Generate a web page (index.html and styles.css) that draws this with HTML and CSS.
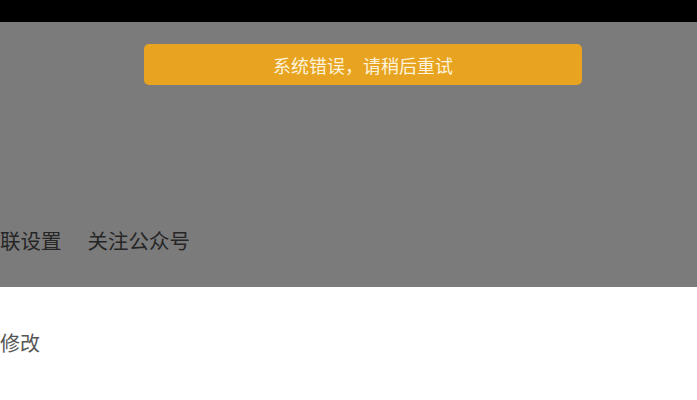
FILE: index.html
```html
<!DOCTYPE html>
<html lang="zh">
<head>
<meta charset="utf-8">
<title>设置</title>
<link rel="stylesheet" href="styles.css">
</head>
<body>
<div class="statusbar"></div>
<div class="masked">
  <div class="header-line"></div>
  <div class="nav">
    <span class="nav-item">联设置</span>
    <span class="nav-item">关注公众号</span>
  </div>
  <div class="toast">系统错误，请稍后重试</div>
</div>
<div class="content">
  <div class="row">修改</div>
</div>
</body>
</html>
```
FILE: styles.css
```css
html, body {
  margin: 0;
  padding: 0;
  width: 697px;
  height: 400px;
  overflow: hidden;
  background: #ffffff;
  font-family: "Noto Sans CJK SC", "Noto Sans", sans-serif;
}
.statusbar {
  height: 22px;
  background: #000000;
}
.masked {
  position: relative;
  height: 265px;
  background: #7b7b7b;
  display: flex;
  flex-direction: column;
  justify-content: flex-end;
}
.header-line {
  position: absolute;
  left: 0;
  right: 0;
  top: 73px;
  height: 1px;
  background: #797979;
}
.nav {
  height: 94px;
  display: flex;
  align-items: center;
  gap: 26px;
  font-size: 20.5px;
  color: #262626;
}
.toast {
  position: absolute;
  left: 144px;
  top: 22px;
  width: 438px;
  height: 41px;
  border-radius: 5px;
  background: #e8a320;
  color: #fdf3dc;
  font-size: 18px;
  display: flex;
  align-items: center;
  justify-content: center;
}
.content {
  padding-top: 41px;
}
.row {
  font-size: 20px;
  line-height: 30px;
  color: #555555;
}
```
